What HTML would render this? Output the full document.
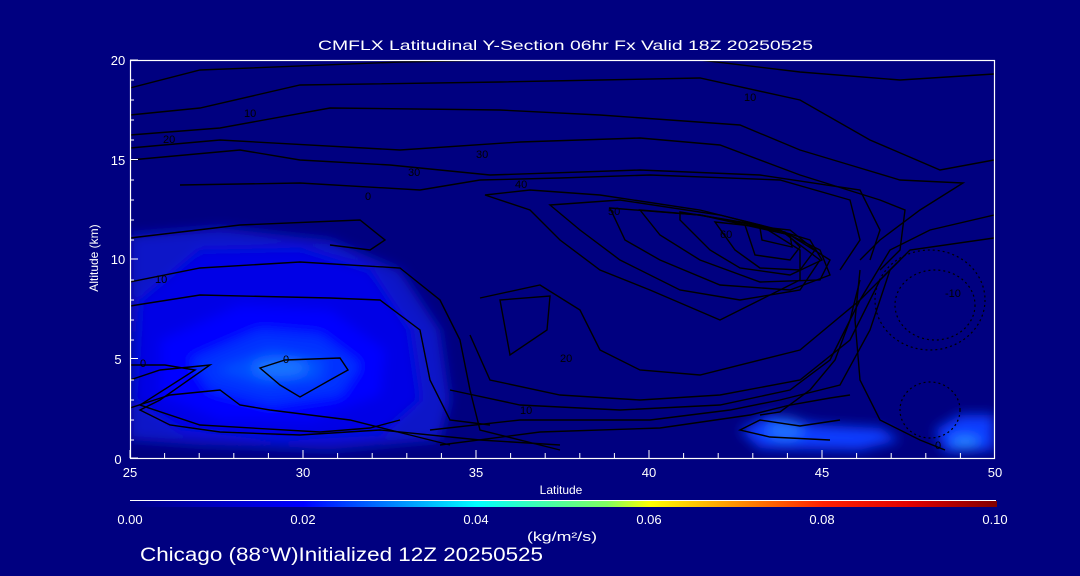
<!DOCTYPE html>
<html><head><meta charset="utf-8"><style>
html,body{margin:0;padding:0;background:#000080;width:1080px;height:576px;overflow:hidden}
svg{display:block}
text{font-family:"Liberation Sans",sans-serif;fill:#fff}
</style></head><body>
<svg width="1080" height="576" viewBox="0 0 1080 576">
<defs>
<linearGradient id="cb" x1="0" x2="1">
<stop offset="0" stop-color="#000080"/><stop offset="0.2" stop-color="#0000ff"/><stop offset="0.4" stop-color="#00ffff"/><stop offset="0.55" stop-color="#80ff60"/><stop offset="0.6" stop-color="#ffff00"/><stop offset="0.8" stop-color="#ff2000"/><stop offset="0.9" stop-color="#e00000"/><stop offset="1" stop-color="#800000"/>
</linearGradient>
<filter id="bl"><feGaussianBlur stdDeviation="6"/></filter>
<clipPath id="pc"><rect x="130" y="60" width="864" height="398"/></clipPath>
</defs>
<g clip-path="url(#pc)">
<g filter="url(#bl)">
<path d="M130 235 L220 228 L330 240 L400 270 L440 330 L450 400 L440 440 L330 450 L200 445 L130 440Z" fill="#0814c8"/>
<path d="M140 300 L200 250 L300 248 L370 270 L410 330 L420 400 L380 435 L280 440 L180 430 L135 400Z" fill="#0000e6"/>
<path d="M160 340 L240 305 L330 310 L385 350 L380 395 L310 420 L220 420 L160 395Z" fill="#0000ff"/>
<path d="M190 360 L260 330 L320 335 L360 365 L340 395 L270 405 L210 390Z" fill="#0030ff"/>
<path d="M215 370 L270 350 L325 360 L320 380 L265 385Z" fill="#0050ff"/>
<ellipse cx="280" cy="368" rx="28" ry="8" fill="#1a78ff"/>
<path d="M740 430 L770 415 L790 420 L820 425 L880 428 L900 440 L860 450 L760 448Z" fill="#0a3cff"/>
<ellipse cx="785" cy="430" rx="18" ry="12" fill="#1a6cff"/>
<path d="M935 430 L960 415 L994 415 L994 450 L945 452Z" fill="#0a3cff"/>
<ellipse cx="965" cy="442" rx="14" ry="5" fill="#2a90ff"/>
</g>
<g fill="none" stroke="#000" stroke-width="1.4">
<path d="M130 88 L200 70 L400 62 L500 60 L700 60 L800 72 L900 80 L994 74"/>
<path d="M130 115 L200 108 L300 85 L500 82 L600 80 L700 78 L800 100 L870 140 L940 170 L994 160"/>
<path d="M130 135 L220 128 L330 108 L500 110 L600 115 L740 125 L800 150 L850 165 L900 180 L963 183 L920 210 L880 240 L860 260"/>
<path d="M130 148 L220 140 L400 150 L520 142 L580 140 L640 138 L720 145 L800 175 L880 200 L905 210 L900 250 L880 270"/>
<path d="M130 160 L240 150 L300 160 L390 165 L440 170 L490 175 L640 170 L760 175 L860 190 L880 230 L870 260"/>
<path d="M180 185 L300 183 L420 190 L480 180 L560 178 L650 175 L780 180 L850 200 L860 240 L840 270"/>
<path d="M130 238 L240 225 L360 220 L385 240 L370 250 L330 245"/>
<path d="M130 282 L200 268 L300 262 L400 268 L440 300 L460 340 L470 390 L480 430 L560 450"/>
<path d="M130 306 L200 295 L330 298 L380 300 L420 330 L430 380 L450 420 L490 425"/>
<path d="M485 195 L530 190 L600 195 L700 210 L760 225 L800 250 L800 280 L760 300 L720 320 L650 290 L600 270 L560 240 L530 210Z"/>
<path d="M550 205 L620 200 L720 215 L780 230 L820 260 L800 290 L740 300 L680 290 L620 260 L580 230Z"/>
<path d="M610 208 L700 215 L780 230 L820 250 L830 275 L790 290 L720 285 L660 260 L625 240Z"/>
<path d="M640 210 L700 215 L790 235 L830 260 L820 280 L760 282 L700 260 L660 235Z"/>
<path d="M680 212 L760 225 L810 240 L822 260 L790 275 L740 268 L710 250 L680 220Z"/>
<path d="M715 222 L790 230 L815 250 L800 270 L760 268 L735 250Z"/>
<path d="M745 225 L785 232 L800 247 L790 260 L755 255Z"/>
<path d="M760 228 L790 235 L792 247 L762 240Z"/>
<path d="M480 298 L540 285 L580 310 L600 350 L640 370 L700 375 L800 350 L860 300 L890 250 L930 230 L994 215"/>
<path d="M500 300 L550 296 L547 330 L510 355 Z"/>
<path d="M470 335 L490 380 L560 395 L640 400 L720 395 L800 380 L850 340 L880 280 L910 250 L994 238"/>
<path d="M450 390 L520 405 L620 410 L720 405 L790 390 L830 360 L860 300 L900 260"/>
<path d="M430 430 L520 420 L650 420 L730 410 L780 400 L840 385 L870 330 L890 270"/>
<path d="M440 445 L540 432 L660 428 L750 415 L790 405 L830 398 L850 395"/>
<path d="M860 270 L855 320 L860 380 L880 420 L920 440 L945 450"/>
<path d="M760 415 L780 412 L810 390 L835 360 L850 320 L860 280"/>
<path d="M130 408 L170 395 L220 390 L240 405 L270 410 L350 420 L410 435 L450 445"/>
<path d="M130 380 L160 370 L210 365 L160 400 L140 410 L170 425 L220 432 L300 435 L380 430 L480 440 L560 445"/>
<path d="M130 365 L165 365 L195 370 L140 405 L200 425 L320 432 L370 428 L400 420"/>
<path d="M260 368 L285 360 L340 358 L348 370 L330 380 L300 397 L280 385Z"/>
<path d="M840 420 L800 426 L760 420 L740 430 L770 437 L830 440"/>
</g>
<g fill="none" stroke="#000" stroke-width="1.2" stroke-dasharray="2 3">
<ellipse cx="930" cy="300" rx="55" ry="50"/>
<ellipse cx="935" cy="305" rx="40" ry="35"/>
<ellipse cx="930" cy="410" rx="30" ry="28"/>
</g>
<g font-size="11">
<text x="244" y="117" style="fill:#000">10</text>
<text x="163" y="143" style="fill:#000">20</text>
<text x="365" y="200" style="fill:#000">0</text>
<text x="408" y="176" style="fill:#000">30</text>
<text x="476" y="158" style="fill:#000">30</text>
<text x="515" y="188" style="fill:#000">40</text>
<text x="608" y="215" style="fill:#000">50</text>
<text x="720" y="238" style="fill:#000">60</text>
<text x="744" y="101" style="fill:#000">10</text>
<text x="155" y="283" style="fill:#000">10</text>
<text x="283" y="363" style="fill:#000">0</text>
<text x="140" y="367" style="fill:#000">0</text>
<text x="560" y="362" style="fill:#000">20</text>
<text x="520" y="414" style="fill:#000">10</text>
<text x="945" y="297" style="fill:#000">-10</text>
<text x="935" y="449" style="fill:#000">0</text>
</g>
</g>
<rect x="130.5" y="60.5" width="864" height="398" fill="none" stroke="#fff" stroke-width="1.2"/>
<g stroke="#fff" stroke-width="1">
<path d="M130 458v-8M164.6 458v-5M199.2 458v-5M233.8 458v-5M268.4 458v-5M303 458v-8M337.6 458v-5M372.2 458v-5M406.8 458v-5M441.4 458v-5M476 458v-8M510.6 458v-5M545.2 458v-5M579.8 458v-5M614.4 458v-5M649 458v-8M683.6 458v-5M718.2 458v-5M752.8 458v-5M787.4 458v-5M822 458v-8M856.6 458v-5M891.2 458v-5M925.8 458v-5M960.4 458v-5"/>
<path d="M130 60h8M130 159.5h8M130 259h8M130 358.5h8M130 458h8M130 80h4M130 100h4M130 120h4M130 140h4M130 180h4M130 200h4M130 220h4M130 240h4M130 280h4M130 300h4M130 320h4M130 340h4M130 380h4M130 400h4M130 420h4M130 440h4"/>
</g>
<g font-size="13">
<text x="118" y="464" text-anchor="middle">0</text>
<text x="118" y="364" text-anchor="middle">5</text>
<text x="118" y="264" text-anchor="middle">10</text>
<text x="118" y="165" text-anchor="middle">15</text>
<text x="118" y="65" text-anchor="middle">20</text>
<text x="130" y="477" text-anchor="middle">25</text>
<text x="303" y="477" text-anchor="middle">30</text>
<text x="476" y="477" text-anchor="middle">35</text>
<text x="649" y="477" text-anchor="middle">40</text>
<text x="822" y="477" text-anchor="middle">45</text>
<text x="995" y="477" text-anchor="middle">50</text>
<text x="318" y="50" font-size="14" textLength="495" lengthAdjust="spacingAndGlyphs">CMFLX Latitudinal Y-Section 06hr  Fx Valid 18Z 20250525</text>
<text x="561" y="494" text-anchor="middle" font-size="12">Latitude</text>
<text x="98" y="258" text-anchor="middle" font-size="12" transform="rotate(-90 98 258)">Altitude (km)</text>
</g>
<rect x="130" y="500" width="866" height="1" fill="#fff"/>
<rect x="130" y="501" width="867" height="6" fill="url(#cb)"/>
<g font-size="13">
<text x="130" y="524" text-anchor="middle">0.00</text>
<text x="303" y="524" text-anchor="middle">0.02</text>
<text x="476" y="524" text-anchor="middle">0.04</text>
<text x="649" y="524" text-anchor="middle">0.06</text>
<text x="822" y="524" text-anchor="middle">0.08</text>
<text x="995" y="524" text-anchor="middle">0.10</text>
<text x="527" y="541" textLength="70" lengthAdjust="spacingAndGlyphs">(kg/m²/s)</text>
<text x="140" y="561" font-size="19" textLength="403" lengthAdjust="spacingAndGlyphs">Chicago (88°W)Initialized 12Z 20250525</text>
</g>
</svg>
</body></html>
